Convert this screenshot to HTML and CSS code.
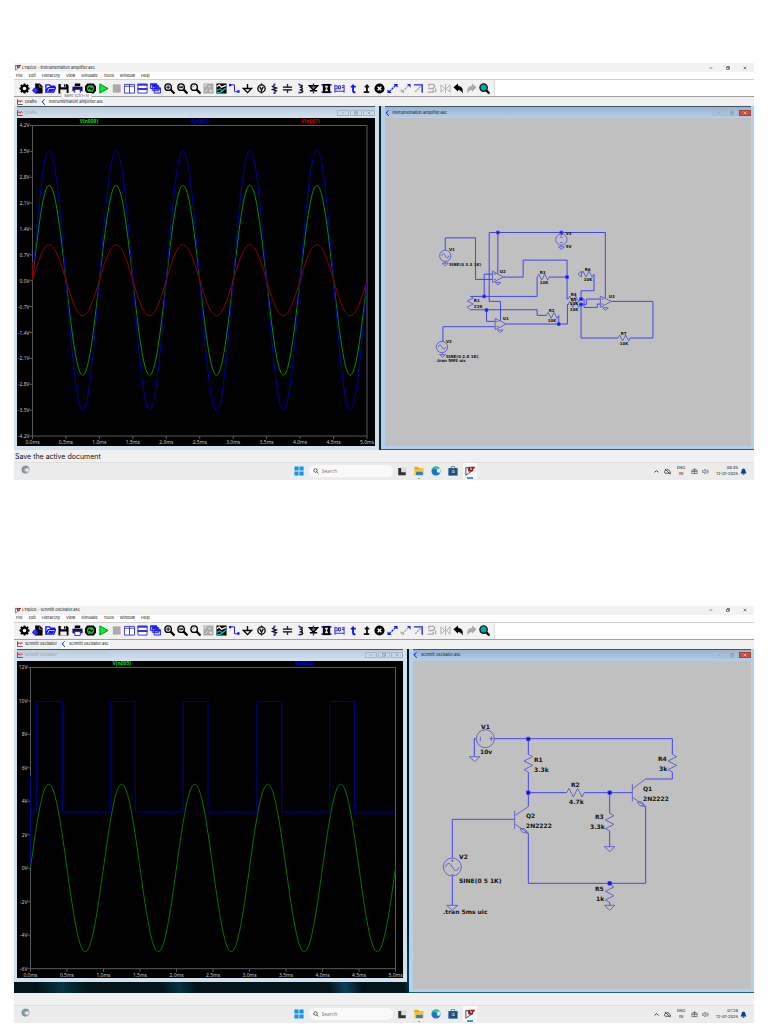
FILE: index.html
```html
<!DOCTYPE html>
<html lang="en">
<head>
<meta charset="utf-8">
<meta name="viewport" content="width=device-width, initial-scale=1">
<title>LTspice simulations</title>
<link rel="stylesheet" href="styles.css">
</head>
<body>
<svg class="sprite" aria-hidden="true">
  <symbol id="lt" viewBox="0 0 24 24"><path d="M2 3v19M2 4h9M7 4l3 9M2 22 20 10" stroke="#333" stroke-width="2" fill="none"/><path d="M9 2h4v7h4v4H8zM14 2h10l-1 4h-3l-2 7h-3l2-7h-3z" fill="#a01018"/></symbol>
  <symbol id="wave" viewBox="0 0 24 24"><path d="M2 1v21h21" stroke="#333" stroke-width="3" fill="none"/><path d="M4 4h18v6H4z" fill="#f3aaaa"/><path d="m4 12 4-5 5 6 4-6 5 3" stroke="#c42020" stroke-width="3" fill="none"/></symbol>
  <symbol id="asc" viewBox="0 0 24 24"><path d="M14 1 7 8v7l9 8M3 11h4" stroke="#1c1cf0" stroke-width="4" fill="none"/></symbol>
  <symbol id="min" viewBox="0 0 24 24"><path d="M4 12h16" stroke="currentColor" stroke-width="3"/></symbol>
  <symbol id="max" viewBox="0 0 24 24"><path d="M3 8h13v13H3zM8 8V3h13v13h-5" fill="none" stroke="currentColor" stroke-width="3"/></symbol>
  <symbol id="close" viewBox="0 0 24 24"><path d="m4 4 16 16M20 4 4 20" stroke="currentColor" stroke-width="3"/></symbol>
</svg>

<template id="toolbar-icons">
  <button aria-label="Settings"><svg viewBox="0 0 24 24"><circle cx="12" cy="12" r="6.5" fill="none" stroke="#000" stroke-width="5"/><path d="M12 1v4M12 19v4M1 12h4M19 12h4M4 4l3 3M17 17l3 3M4 20l3-3M17 7l3-3" stroke="#000" stroke-width="4"/></svg></button>
  <button aria-label="New schematic"><svg viewBox="0 0 24 24"><path d="M7 1h10l6 6v16H7z"/><path d="M16 3v6h6" stroke="#fff" fill="none"/><circle cx="7" cy="16" r="4" fill="#ccf" stroke="#22f" stroke-width="3"/><path d="M7 9v14M0 16h14" stroke="#22f" stroke-width="2"/></svg></button>
  <button aria-label="Open"><svg viewBox="0 0 24 24"><path d="M2 20V4h8l2 3h9v4M2 20l5-10h16l-4 10z" fill="#fff" stroke="#11f" stroke-width="3"/><path d="m6 19 3-6h11l-3 6z" fill="#11f"/></svg></button>
  <button aria-label="Save"><svg viewBox="0 0 24 24"><path d="M1 2h19l3 4v17H1z"/><path d="M6 2h11v7H6zM5 14h14v9H5z" fill="#eee"/><path d="M13 3h3v5h-3z"/></svg></button>
  <button aria-label="Print"><svg viewBox="0 0 24 24"><path d="M6 1h12v6H6z"/><path d="M1 8h22v10H1z" fill="#114"/><path d="M6 14h12v9H6z" fill="#fff" stroke="#22f" stroke-width="2"/></svg></button>
  <button aria-label="Component"><svg viewBox="0 0 24 24"><path d="M6 3h12l4 5v8l-4 5H6l-4-5V8z" fill="#0c2" stroke="#000" stroke-width="4"/><path d="M0 8h5M0 16h5M19 8h5M19 16h5M7 13l3-3 4 4 3-3" stroke="#000" stroke-width="3" fill="none"/></svg></button>
  <button aria-label="Run"><svg viewBox="0 0 24 24"><path d="m4 2 18 10L4 22z" fill="#0e3" stroke="#080" stroke-width="2"/></svg></button>
  <button aria-label="Stop"><svg viewBox="0 0 24 24"><path d="M4 3h17v18H4z" fill="#aaa"/></svg></button>
  <button aria-label="Tile vertically"><svg viewBox="0 0 24 24"><path d="M1 3h22v19H1zM12 3v19M1 7h22" fill="#fff" stroke="#33e" stroke-width="2"/></svg></button>
  <button aria-label="Tile horizontally"><svg viewBox="0 0 24 24"><path d="M2 2h20v20H2z" fill="#fff" stroke="#33e" stroke-width="2"/><path d="M1 4h22M1 13h22" stroke="#33e" stroke-width="4"/></svg></button>
  <button aria-label="Cascade"><svg viewBox="0 0 24 24"><g fill="#ccf" stroke="#22e" stroke-width="2"><path d="M1 2h14v10H1zM5 6h14v10H5zM9 11h14v11H9z"/></g><path d="M1 3h14M5 7h14M9 12h14" stroke="#22e" stroke-width="4"/></svg></button>
  <button aria-label="Zoom in"><svg viewBox="0 0 24 24"><circle cx="9" cy="9" r="7" fill="#ddd" stroke="#000" stroke-width="3"/><path d="m14 14 9 9" stroke="#000" stroke-width="5"/><path d="M5 9h8M9 5v8" stroke="#000" stroke-width="2"/></svg></button>
  <button aria-label="Zoom out"><svg viewBox="0 0 24 24"><circle cx="9" cy="9" r="7" fill="#ddd" stroke="#000" stroke-width="3"/><path d="m14 14 9 9" stroke="#000" stroke-width="5"/><path d="M5 9h8" stroke="#000" stroke-width="3"/></svg></button>
  <button aria-label="Zoom area"><svg viewBox="0 0 24 24"><circle cx="9" cy="9" r="7" fill="#eee" stroke="#000" stroke-width="3"/><path d="m14 14 9 9" stroke="#000" stroke-width="5"/><path d="M5 10l5-5" stroke="#777" stroke-width="2"/></svg></button>
  <button aria-label="Autorange"><svg viewBox="0 0 24 24"><path d="M1 1h22v22H1z" fill="#aaa"/><path d="m5 19 5-5M4 9V4h5M14 17h6M17 14v6M12 8h5" stroke="#eee" stroke-width="2" fill="none"/></svg></button>
  <button aria-label="Plot settings"><svg viewBox="0 0 24 24"><path d="M1 1h22v22H1z"/><path d="m2 8 5-4 5 5 10-4" stroke="#eee" stroke-width="3" fill="none"/><path d="m2 16 6-3 6 4 8-6M2 21h7l4-3" stroke="#0bb" stroke-width="3" fill="none"/></svg></button>
  <button aria-label="Wire"><svg viewBox="0 0 24 24"><path d="M1 4h11v15h10" stroke="#11f" stroke-width="2" fill="none"/><path d="M0 2h5v5H0zM18 16h5v5h-5z" fill="#11f"/></svg></button>
  <button aria-label="Ground"><svg viewBox="0 0 24 24"><path d="M12 2v10M3 12h18l-9 9z" fill="none" stroke="#000" stroke-width="3"/></svg></button>
  <button aria-label="Voltage source"><svg viewBox="0 0 24 24"><circle cx="12" cy="12" r="8" fill="none" stroke="#111" stroke-width="3"/><path d="m8 8 4 8 4-8M12 1v4M12 19v4" stroke="#111" stroke-width="3" fill="none"/></svg></button>
  <button aria-label="Resistor"><svg viewBox="0 0 24 24"><path d="M12 5 8 8l8 3-8 3 8 3-4 3" stroke="#111" stroke-width="3" fill="none"/><path d="M12 1v4M12 19v5" stroke="#22f" stroke-width="4"/></svg></button>
  <button aria-label="Capacitor"><svg viewBox="0 0 24 24"><path d="M2 9h20M2 15h20" stroke="#000" stroke-width="3"/><path d="M12 2v7M12 15v7" stroke="#226" stroke-width="3"/></svg></button>
  <button aria-label="Inductor"><svg viewBox="0 0 24 24"><path d="M9 4c9 0 9 5 1 5 8 0 8 6 0 6 9 0 9 6 0 6" stroke="#111" stroke-width="3" fill="none"/><path d="M9 1v4M9 19v4" stroke="#22f" stroke-width="3"/></svg></button>
  <button aria-label="Diode"><svg viewBox="0 0 24 24"><path d="M3 6h18l-9 10zM4 17h16" stroke="#000" stroke-width="3" fill="#777"/><path d="M12 1v5M12 18v5" stroke="#22f" stroke-width="3"/></svg></button>
  <button aria-label="Part"><svg viewBox="0 0 24 24"><path d="M4 2h16v20H4z"/><path d="M8 6h8l-3 6 3 6H8l3-6z" fill="#ddd"/><path d="M1 4h4M1 20h4M19 4h4M19 20h4" stroke="#22f" stroke-width="4"/></svg></button>
  <button aria-label="Net label"><svg viewBox="0 0 24 24"><path d="M2 4v17M22 4v17M2 18h20M2 6h5v7H2M10 6v7h4V6zM17 6h5M17 10h5" stroke="#22d" stroke-width="2" fill="none"/></svg></button>
  <button aria-label="Text"><svg viewBox="0 0 24 24"><path d="M11 3v15q0 3 5 2M6 8h11" stroke="#11f" stroke-width="4" fill="none"/></svg></button>
  <button aria-label="SPICE directive"><svg viewBox="0 0 24 24"><path d="M13 3v17M8 8h10M6 20h12" stroke="#111" stroke-width="4" fill="none"/></svg></button>
  <button aria-label="Delete"><svg viewBox="0 0 24 24"><circle cx="12" cy="12" r="11"/><path d="m8 8 8 8m0-8-8 8" stroke="#fff" stroke-width="3"/></svg></button>
  <button aria-label="Move"><svg viewBox="0 0 24 24"><path d="m5 19 14-14" stroke="#22f" stroke-width="3" stroke-dasharray="5 2"/><path d="M14 2h9v8zM1 14v8h9z" fill="#11f"/></svg></button>
  <button aria-label="Duplicate"><svg viewBox="0 0 24 24"><path d="m5 19 14-14M3 14v6h6" stroke="#aaa" stroke-width="3" stroke-dasharray="5 2" fill="none"/><path d="M15 2h8v8z" fill="#22e"/></svg></button>
  <button aria-label="Drag"><svg viewBox="0 0 24 24"><path d="M2 4h18v17" stroke="#22f" stroke-width="3" fill="none"/><path d="M5 19 18 6" stroke="#99a" stroke-width="3" stroke-dasharray="4 2"/></svg></button>
  <button aria-label="Rotate"><svg viewBox="0 0 24 24"><path d="M6 8V3h10q6 3 0 9H5M3 20h13v-5M21 12v8" stroke="#aaa" stroke-width="3" fill="none"/></svg></button>
  <button aria-label="Mirror"><svg viewBox="0 0 24 24"><path d="M2 4v16l8-8zM22 4v16l-8-8zM12 2v20" stroke="#aaa" stroke-width="2" fill="none"/></svg></button>
  <button aria-label="Undo"><svg viewBox="0 0 24 24"><path d="M1 9 11 1v5q13 1 10 17-3-8-10-8v4z"/></svg></button>
  <button aria-label="Redo"><svg viewBox="0 0 24 24"><path d="M23 9 13 1v5Q0 7 3 23q3-8 10-8v4z" fill="#aaa"/></svg></button>
  <button aria-label="Find"><svg viewBox="0 0 24 24"><circle cx="10" cy="10" r="8" fill="#0aa" stroke="#022" stroke-width="3"/><path d="m16 16 7 7" stroke="#000" stroke-width="5"/></svg></button>
</template>

<template id="taskbar-content">
  <button class="widget" aria-label="Widgets"><svg viewBox="0 0 24 24"><circle cx="12" cy="12" r="11" fill="#a3afb6"/><path d="M20 10q-9-3-8 4 2 5 8 3" fill="#eef1f3"/><path d="M19 6Q8 2 5 11t7 9" fill="none" stroke="#7c8a93" stroke-width="4"/></svg></button>
  <div class="dock">
    <button aria-label="Start"><svg viewBox="0 0 24 24"><path d="M1 1h10v10H1zM13 1h10v10H13zM1 13h10v10H1zM13 13h10v10H13z" fill="#1494e6"/></svg></button>
    <label class="search"><svg viewBox="0 0 24 24"><circle cx="10" cy="10" r="7" fill="none" stroke="#333" stroke-width="3"/><path d="m15 15 7 7" stroke="#333" stroke-width="3"/></svg><input type="search" placeholder="Search" aria-label="Search"></label>
    <button aria-label="Task view"><svg viewBox="0 0 24 24"><path d="M8 3h15v14H8z" fill="#ddd"/><path d="M3 5h7v10h11v7H3z" fill="#333"/></svg></button>
    <button class="open" aria-label="File Explorer"><svg viewBox="0 0 24 24"><path d="M1 2h9l3 3h10v17H1z" fill="#f7c331"/><path d="M1 3h9l3 4H1z" fill="#e6a113"/><path d="M5 14h16v8H5z" fill="#2c83c9"/></svg></button>
    <button aria-label="Edge"><svg viewBox="0 0 24 24"><circle cx="12" cy="12" r="11" fill="#1477cf"/><path d="M2 9C5-2 22-1 23 11c0 6-7 6-9 3 3-6-7-9-12-5z" fill="#35c48a"/><path d="M14 14c2 3 9 3 9-3q0-3-2-5-7 0-7 8z" fill="#eef"/></svg></button>
    <button aria-label="Store"><svg viewBox="0 0 24 24"><path d="M1 5h22v18H1z" fill="#134f8c"/><path d="M8 5V1h8v4" fill="none" stroke="#2c7dbf" stroke-width="2"/><path d="M8 9h4v4H8z" fill="#e54"/><path d="M12 9h4v4h-4z" fill="#7b3"/><path d="M8 13h4v4H8z" fill="#39e"/><path d="M12 13h4v4h-4z" fill="#fb2"/></svg></button>
    <button class="active" aria-label="LTspice"><svg><use href="#lt"/></svg></button>
  </div>
  <div class="tray">
    <svg viewBox="0 0 24 24"><path d="m5 15 7-6 7 6" fill="none" stroke="#333" stroke-width="3"/></svg>
    <svg viewBox="0 0 24 24"><path d="M6 18a5 5 0 0 1 1-10 6 6 0 0 1 11 2q5 1 4 8zM3 3l19 19" fill="none" stroke="#444" stroke-width="3"/></svg>
    <span class="lang">ENG<br>IN</span>
    <svg viewBox="0 0 24 24"><path d="M3 7h18v12H3zM12 3v18M3 12h18M7 4h10" fill="none" stroke="#444" stroke-width="2"/></svg>
    <svg viewBox="0 0 24 24"><path d="M1 9h4l6-5v16l-6-5H1zM15 8q4 4 0 8M19 5q5 7 0 14" fill="none" stroke="#444" stroke-width="2"/></svg>
    <time></time>
    <svg viewBox="0 0 24 24"><path d="M12 2q7 1 7 9l3 8H2l3-8q0-8 7-9zM9 20h6v3H9z" fill="#0d3f97"/></svg>
  </div>
</template>

<main class="page">
<section class="app">
  <header class="titlebar"><svg><use href="#lt"/></svg><h1>LTspice - instrumentation amplifier.asc</h1>
    <div class="controls"><button aria-label="Minimize"><svg><use href="#min"/></svg></button><button aria-label="Restore"><svg><use href="#max"/></svg></button><button aria-label="Close"><svg><use href="#close"/></svg></button></div></header>
  <nav class="menu"><button>File</button><button>Edit</button><button>Hierarchy</button><button>View</button><button>Simulate</button><button>Tools</button><button>Window</button><button>Help</button></nav>
  <div class="toolbar"><div class="tools"></div></div>
  <nav class="tabs"><button><svg><use href="#wave"/></svg>Draft6</button><button class="current"><svg><use href="#asc"/></svg>instrumentation amplifier.asc</button><span class="tip">Save (Ctrl+S)</span></nav>
  <div class="mdi split-even">
    <article class="child idle">
      <header><svg><use href="#wave"/></svg><h2>Draft6</h2><div class="caption"><button aria-label="Minimize"><svg><use href="#min"/></svg></button><button aria-label="Restore"><svg><use href="#max"/></svg></button><button aria-label="Close"><svg><use href="#close"/></svg></button></div></header>
      <svg class="plot" id="plot-amplifier" viewBox="17 118 358 328" role="img" aria-label="Amplifier waveforms"></svg>
    </article>
    <article class="child">
      <header><svg><use href="#asc"/></svg><h2>instrumentation amplifier.asc</h2><div class="caption"><button aria-label="Minimize"><svg><use href="#min"/></svg></button><button aria-label="Restore"><svg><use href="#max"/></svg></button><button class="danger" aria-label="Close"><svg><use href="#close"/></svg></button></div></header>
      <svg class="sheet" viewBox="385 118 367 328" role="img" aria-label="Instrumentation amplifier schematic">
        <g class="wires" transform="translate(425 220) scale(.33333)">
          <path d="M61 91V54H152V179H203M193 245V38H542V235M193 245H227V304M219 38V162M236 172H295V121H427V238H430M373 172H427M337 172V230H136M178 230V163H203M136 270H337V287H365M402 287V313M185 271V305H211M244 313H428V254H432M211 321H54V365M469 238V213H508V163M469 254V355H580M616 355H685V245H560M466 254H485V238H527M469 238H478V263H518V253H527"/>
          <g class="parts">
            <circle cx="61" cy="108" r="17"/><path d="M50 108q5-13 11 0t11 0M52 130h18l-9 8zM61 125v5"/>
            <circle cx="51" cy="382" r="17"/><path d="M40 382q5-13 11 0t11 0M44 405h18l-9 8zM53 399v6"/>
            <circle cx="410" cy="59" r="17"/><path d="M410 38v10M406 52h8M406 68h8M410 76v5M401 81h18l-9 8z"/>
            <path d="M203 154v34l33-16zM206 163h7M206 179h7M211 188h17l-9 8zM211 296v34l33-17zM214 305h7M214 321h7M218 331h17l-9 8zM527 229v34l33-18zM530 238h7M530 253h7M534 264h17l-9 8z"/>
            <path d="M136 230l9 5-18 9 18 9-18 9 9 8M337 172l5-9 9 18 9-18 9 18 4-9M365 287l5-9 9 18 9-18 9 18 5-9M430 238l5-9 9 18 9-18 9 18 4-9M430 254l5-9 9 18 9-18 9 18 4-9M470 163l5-9 9 18 9-18 9 18 6-9M580 355l5-9 9 18 9-18 9 18 4-9M470 154v18l-10-9z"/>
          </g>
          <path class="nodes" d="M215 34h8v8h-8zM406 34h8v8h-8zM423 168h8v8h-8zM174 226h8v8h-8zM181 267h8v8h-8zM398 309h8v8h-8zM465 234h8v8h-8zM465 250h8v8h-8z"/>
        </g>
        <g class="labels small">
          <text x="449" y="251">V1</text><text x="449" y="266">SINE(0 3.3 1K)</text><text x="500" y="273">U2</text><text x="540" y="274">R3</text><text x="540" y="284">10K</text><text x="566" y="235">V3</text><text x="566" y="248">5V</text><text x="571" y="296">R4</text><text x="571" y="301">R5</text><text x="570" y="305">10K</text><text x="570" y="311">10K</text><text x="585" y="271">R6</text><text x="584" y="281">10K</text><text x="609" y="298">U3</text><text x="474" y="302">R1</text><text x="474" y="308">22K</text><text x="549" y="312">R2</text><text x="548" y="322">10K</text><text x="503" y="320">U1</text><text x="621" y="335">R7</text><text x="620" y="345">10K</text><text x="446" y="343">V2</text><text x="446" y="358">SINE(0 2.8 1K)</text><text x="436" y="362">.tran 5MS uic</text>
        </g>
      </svg>
    </article>
  </div>
  <p class="status">Save the active document</p>
  <footer class="taskbar" data-time="08:45"></footer>
</section>

<section class="app">
  <header class="titlebar"><svg><use href="#lt"/></svg><h1>LTspice - schmitt oscillator.asc</h1>
    <div class="controls"><button aria-label="Minimize"><svg><use href="#min"/></svg></button><button aria-label="Restore"><svg><use href="#max"/></svg></button><button aria-label="Close"><svg><use href="#close"/></svg></button></div></header>
  <nav class="menu"><button>File</button><button>Edit</button><button>Hierarchy</button><button>View</button><button>Simulate</button><button>Tools</button><button>Window</button><button>Help</button></nav>
  <div class="toolbar"><div class="tools"></div></div>
  <nav class="tabs"><button><svg><use href="#wave"/></svg>schmitt oscillator</button><button class="current"><svg><use href="#asc"/></svg>schmitt oscillator.asc</button></nav>
  <div class="mdi split-wide">
    <article class="child idle">
      <header><svg><use href="#wave"/></svg><h2>schmitt oscillator</h2><div class="caption"><button aria-label="Minimize"><svg><use href="#min"/></svg></button><button aria-label="Restore"><svg><use href="#max"/></svg></button><button aria-label="Close"><svg><use href="#close"/></svg></button></div></header>
      <svg class="plot" id="plot-schmitt" viewBox="17 661 387 318" role="img" aria-label="Oscillator waveforms"></svg>
    </article>
    <article class="child">
      <header><svg><use href="#asc"/></svg><h2>schmitt oscillator.asc</h2><div class="caption"><button aria-label="Minimize"><svg><use href="#min"/></svg></button><button aria-label="Restore"><svg><use href="#max"/></svg></button><button class="danger" aria-label="Close"><svg><use href="#close"/></svg></button></div></header>
      <svg class="sheet" viewBox="413 661 338 328" role="img" aria-label="Schmitt oscillator schematic">
        <g class="wires" transform="translate(430 710) scale(.33333)">
          <path d="M193 86H727V133M727 186V207H647M139 86H133V140M295 86V133M295 186V290M295 248H410M463 248H607M539 248V310M539 363V410M254 328H67V444M67 498V586M295 370V520H647V290M539 577V586"/>
          <g class="parts">
            <path d="M727 133l13 7-26 13 26 13-26 13 13 7M295 133l13 7-26 13 26 13-26 13 13 7M539 310l13 7-26 13 26 13-26 13 13 7M539 524l13 7-26 13 26 13-26 13 13 7M410 248l7-13 13 26 13-26 13 26 7-13"/>
            <path d="M647 207 608 236M607 222v53M608 262l39 28M295 290l-39 26M254 302v55M256 343l39 27M270 357l13-2 12 15-17-3zM622 277l13-2 12 15-17-3z"/>
            <path d="M118 140h32l-16 15zM50 586h34l-17 15zM523 410h32l-16 15zM523 586h32l-16 15z"/>
            <circle cx="166" cy="86" r="27"/><path d="M151 80v13M184 79v14M178 86h15"/>
            <circle cx="67" cy="471" r="27"/><path d="M46 471q10-22 21 0t21 0M67 448v8M64 452h6M64 494h6"/>
          </g>
          <path class="nodes" d="M290 82h10v10h-10zM290 243h10v10h-10zM534 243h10v10h-10zM534 515h10v10h-10z"/>
        </g>
        <g class="labels">
          <text x="481" y="729">V1</text><text x="480" y="754">10v</text><text x="534" y="762">R1</text><text x="534" y="772">3.3k</text><text x="571" y="787">R2</text><text x="569" y="804">4.7k</text><text x="658" y="761">R4</text><text x="659" y="771">3k</text><text x="643" y="791">Q1</text><text x="643" y="801">2N2222</text><text x="526" y="818">Q2</text><text x="526" y="828">2N2222</text><text x="595" y="819">R3</text><text x="590" y="829">3.3k</text><text x="459" y="859">V2</text><text x="459" y="883">SINE(0 5 1K)</text><text x="595" y="891">R5</text><text x="596" y="901">1k</text><text x="443" y="914">.tran 5ms uic</text>
        </g>
      </svg>
    </article>
  </div>
  <p class="status"></p>
  <footer class="taskbar" data-time="07:28"></footer>
</section>
</main>
<script src="app.js"></script>
</body>
</html>
```

FILE: styles.css
```css
* { box-sizing: border-box; }
body { margin: 0; background: #fff; font-family: Inter, "Open Sans", sans-serif; font-size: 4px; line-height: 6px; color: #111; }
h1, h2, p { margin: 0; font-size: inherit; font-weight: inherit; }
button { margin: 0; padding: 0; border: 0; background: none; font: inherit; color: inherit; display: flex; align-items: center; justify-content: center; }
svg { display: block; flex: none; }
.sprite { position: absolute; width: 0; height: 0; }

.page { display: flex; flex-direction: column; gap: 126px; padding: 63px 14px 0; }
.app { background: #f0f0f0; }

.titlebar { display: flex; align-items: center; height: 9px; padding-left: 1px; gap: 1px; background: #f2f2f2; }
.titlebar > svg { width: 6px; height: 7px; }
.controls { display: flex; margin-left: auto; padding-right: 1px; }
.controls button { width: 17px; }
.controls svg { width: 4px; height: 4px; }

.menu { display: flex; gap: 6px; height: 8px; padding-left: 2px; background: #fff; border-bottom: 1px solid #d0d0d0; }

.toolbar { height: 17px; background: #fff; border-bottom: 1px solid #a0a0a0; }
.tools { display: grid; grid-template-columns: repeat(36, 1fr); align-items: center; width: 65%; height: 16px; padding: 0 3px 0 4px; background: #f2f2f2; border-right: 1px solid #ddd; }
.tools svg { width: 11px; height: 11px; }

.tabs { position: relative; display: flex; gap: 3px; height: 9px; padding-left: 3px; }
.tabs button { gap: 2px; padding-right: 1px; }
.tabs svg { width: 6px; height: 6px; }
.tabs .current { background: #fafafa; }
.tip { position: absolute; left: 47px; top: -4px; padding: 0 2px; background: #f9f9f9; border: 1px solid #ddd; border-top: 0; color: #555; line-height: 6px; }

.mdi { display: grid; gap: 2px; align-items: start; background: #0a2a30; }
.split-even { grid-template-columns: 365fr 374fr; }
.split-wide { grid-template-columns: 393fr 345fr; background: linear-gradient(75deg, #02141a 3%, #063445 6%, #02141a 9%, #02141a 18%, #063445 20%, #02141a 22%, #02141a 38%, #0a3f5c 40%, #02141a 42%, #02141a 47%, #0a3f5c 48%, #02141a 50%); }
.child { padding: 0 3px 3px 4px; background: #b5d0ea; border-bottom: 1px solid #1c6470; }
.idle { padding: 0 4px 4px 3px; background: #d3e1ef; border-bottom: 0; }
.child header { display: flex; align-items: center; gap: 2px; height: 12px; border-top: 1px solid #456; }
.child:not(.idle) header { background: linear-gradient(#97b3d2, #b5cfea); }
.child header > svg { width: 6px; height: 6px; }
.child.idle header { color: #999; background: linear-gradient(#bccbdb, #d3e1ef); }
.caption { display: flex; gap: 1px; margin-left: auto; color: #789; }
.caption button { width: 12px; height: 6px; border: 1px solid #a9b7c6; }
.caption svg { width: 4px; height: 4px; }
.caption .danger { background: #d2513c; border-color: #a04438; color: #fff; }

.plot, .sheet { width: 100%; height: auto; }
.plot { background: #000; }
.sheet { background: #c0c0c0; }
.plot text { font: 5px "Noto Sans", sans-serif; fill: #c4c4c4; text-anchor: middle; }
.plot .volts { text-anchor: end; }
.plot .legend { font-weight: 700; }
.plot path { fill: none; stroke-width: 1; }
.axis { stroke: #5c5c5c; }
.wires path, .wires circle { fill: none; stroke: #4444ee; stroke-width: 3; }
.wires .parts path, .wires .parts circle { stroke: #6464c8; }
.wires .nodes { fill: #0000f0; }
.labels text { font: 700 6px "DejaVu Sans", sans-serif; fill: #111; }
.labels.small text { font-size: 4px; }

.status { height: 12px; padding-left: 1px; font: 7px/14px Inter, "Open Sans", sans-serif; color: #111; }

.taskbar { display: grid; grid-template-columns: 1fr auto 1fr; align-items: center; height: 18px; background: #ececec; border-top: 1px solid #dedede; }
.taskbar svg { width: 10px; height: 10px; }
.widget { justify-self: start; margin: 0 0 3px 7px; }
.taskbar .widget svg { width: 9px; height: 9px; }
.dock { display: flex; align-items: center; gap: 3px; }
.dock button { width: 14px; height: 16px; }
.dock .open { background: linear-gradient(#999, #999) center bottom / 2px 1px no-repeat; }
.dock .active { background: linear-gradient(#3a95dc, #3a95dc) center bottom / 6px 2px no-repeat #f9f9f9; }
.search { display: flex; align-items: center; gap: 3px; width: 84px; height: 12px; padding: 0 4px; margin-right: -1px; background: #f9f9f9; border-radius: 6px; }
.taskbar .search svg { width: 6px; height: 6px; }
.search input { flex: 1; min-width: 0; height: 10px; padding: 0; border: 0; background: none; font: 5px "Open Sans", sans-serif; }
.search input::placeholder { color: #777; }
.tray { display: flex; align-items: center; justify-content: flex-end; gap: 4px; padding-right: 7px; text-align: right; }
.taskbar .tray svg { width: 7px; height: 7px; }
.tray .lang { text-align: center; margin: 0 2px; }
.tray time { margin-left: 3px; }
.tray svg:last-child { margin-left: -2px; }
```

FILE: app.js
```js
document.querySelectorAll('.tools').forEach(el =>
  el.append(document.getElementById('toolbar-icons').content.cloneNode(true)));

document.querySelectorAll('.taskbar').forEach(el => {
  el.append(document.getElementById('taskbar-content').content.cloneNode(true));
  el.querySelector('time').innerHTML = el.dataset.time + '<br>12-01-2026';
});

function sine(box, amplitude) {
  const points = [];
  for (let i = 0; i <= 500; i++) {
    const x = box.left + (box.right - box.left) * i / 500;
    points.push(x.toFixed(2) + ' ' + (box.zero - amplitude * Math.sin(i / 50 * Math.PI)).toFixed(2));
  }
  return 'M' + points.join('L');
}

function drawPlot(id, box, volts, traces) {
  let ticks = '', labels = '';
  volts.forEach((name, i) => {
    const y = box.top + (box.bottom - box.top) * i / (volts.length - 1);
    ticks += `M${box.left - 3} ${y}h3`;
    labels += `<text class="volts" x="${box.left - 3}" y="${y + 2}">${name}</text>`;
  });
  for (let i = 0; i <= 10; i++) {
    const x = box.left + (box.right - box.left) * i / 10;
    ticks += `M${x} ${box.bottom}v3`;
    labels += `<text x="${x}" y="${box.bottom + 8}">${(i / 2).toFixed(1)}ms</text>`;
  }
  const frame = `M${box.left} ${box.top}H${box.right}V${box.bottom}H${box.left}Z`;
  document.getElementById(id).innerHTML =
    `<path class="axis" d="${frame}${ticks}"/>` + labels +
    traces.map(t => `<path d="${t.d}" stroke="${t.line}"/><text class="legend" x="${t.x}" y="${box.top - 2}" style="fill:${t.ink}">${t.name}</text>`).join('');
}

const amp = { left: 32.5, right: 367.5, top: 125.5, bottom: 436.5, zero: 280.5 };
drawPlot('plot-amplifier', amp,
  ['4.2V', '3.5V', '2.8V', '2.1V', '1.4V', '0.7V', '0.0V', '-0.7V', '-1.4V', '-2.1V', '-2.8V', '-3.5V', '-4.2V'],
  [
    { name: 'V(n009)', x: 89, ink: '#00e000', line: '#009400', d: sine(amp, 95) },
    { name: 'V(n003)', x: 200, ink: '#0000e0', line: '#0000a8', d: sine(amp, 130) },
    { name: 'V(n007)', x: 311, ink: '#e00000', line: '#960000', d: 'M32.5 262V280' + sine(amp, 35.5) }
  ]);

const osc = { left: 30.5, right: 396.5, top: 667.5, bottom: 969.5, zero: 868.5 };
const pulses = [[36.5, 62.5], [110.5, 135.5], [183.5, 208.5], [257.5, 282.5], [330.5, 355.5]];
drawPlot('plot-schmitt', osc,
  ['12V', '10V', '8V', '6V', '4V', '2V', '0V', '-2V', '-4V', '-6V'],
  [
    { name: 'V(n002)', x: 305, ink: '#0000e0', line: '#000094',
      d: 'M30.5 868V776M30.5 812.5' + pulses.map(([a, b]) => `H${a}V701.5H${b}V812.5`).join('') + 'H396.5' },
    { name: 'V(n005)', x: 122, ink: '#00e000', line: '#007800', d: sine(osc, 84) }
  ]);
```
